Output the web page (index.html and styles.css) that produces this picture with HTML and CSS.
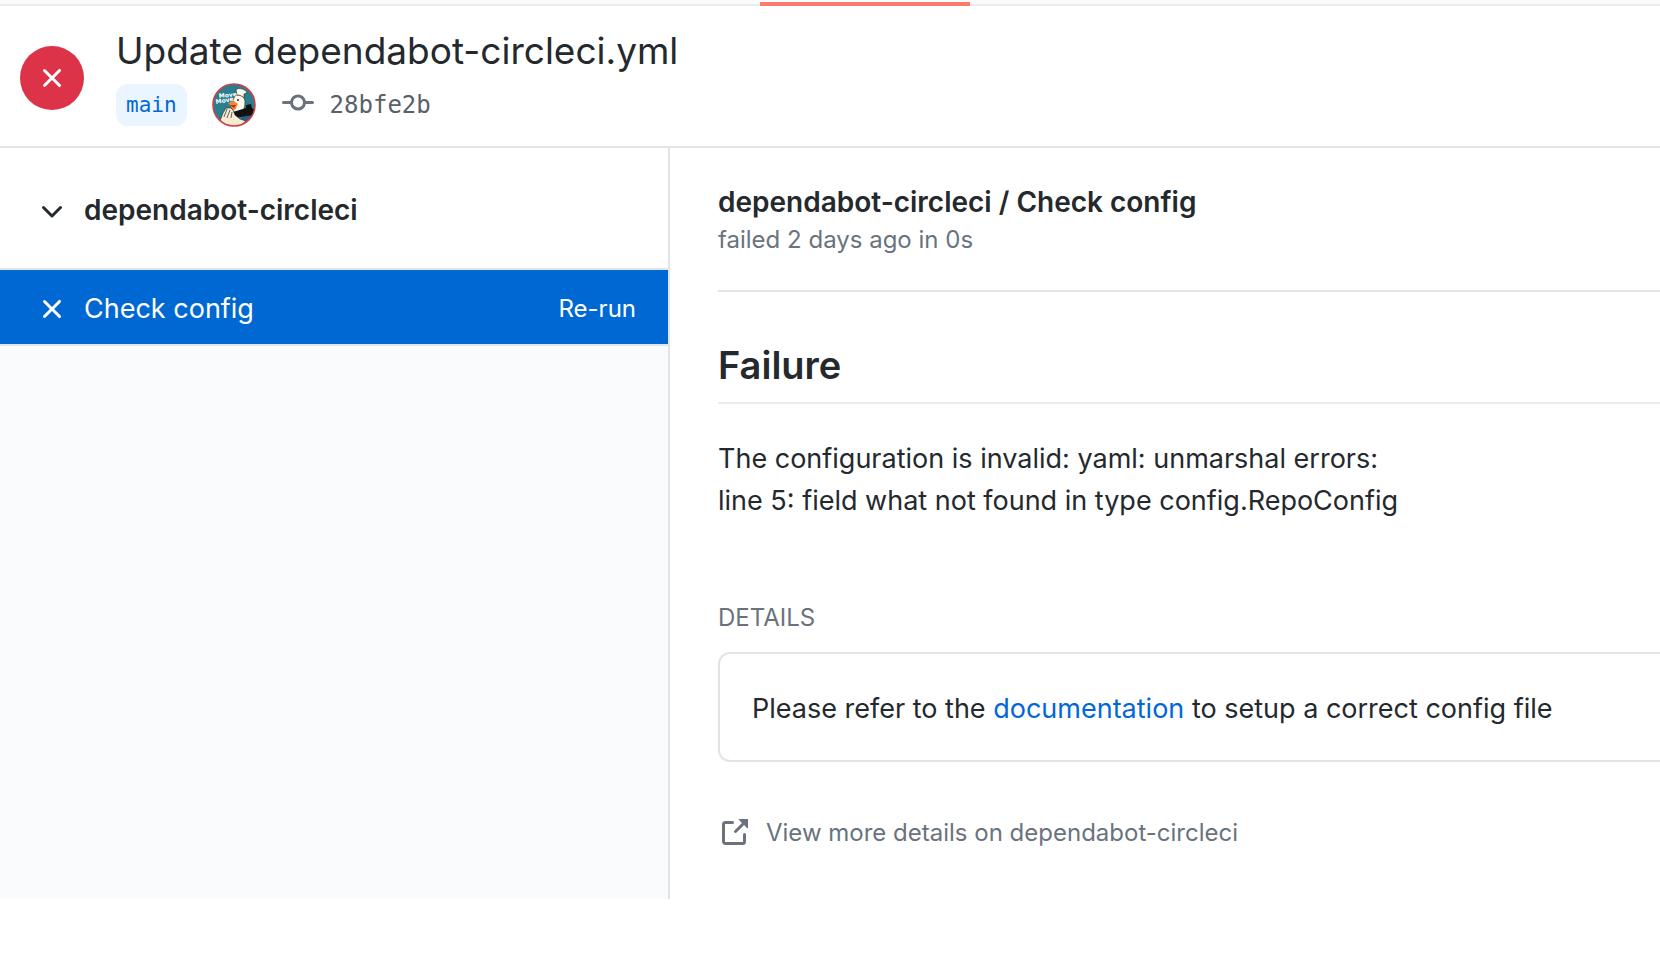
FILE: index.html
```html
<!DOCTYPE html>
<html lang="en">
<head>
    <meta charset="UTF-8">
    <meta name="viewport" content="width=device-width, initial-scale=1.0">
    <title>Update dependabot-circleci.yml - Checks</title>
    <link rel="stylesheet" href="styles.css">
</head>
<body>
    <nav class="tabs">
        <div class="tab-active"></div>
    </nav>

    <header class="commit-header">
        <div class="status-badge">
            <svg class="icon" viewBox="0 0 16 16"><path d="M3.72 3.72a.75.75 0 011.06 0L8 6.94l3.22-3.22a.75.75 0 111.06 1.06L9.06 8l3.22 3.22a.75.75 0 11-1.06 1.06L8 9.06l-3.22 3.22a.75.75 0 01-1.06-1.06L6.94 8 3.72 4.78a.75.75 0 010-1.06z"/></svg>
        </div>
        <div class="commit-info">
            <h1>Update dependabot-circleci.yml</h1>
            <div class="commit-meta">
                <a class="branch" href="#">main</a>
                <svg class="avatar" viewBox="0 0 44 44">
                    <defs>
                        <clipPath id="avatar-clip"><circle cx="22" cy="22" r="21"/></clipPath>
                    </defs>
                    <g clip-path="url(#avatar-clip)">
                        <rect width="44" height="44" fill="#2a7f8f"/>
                        <path d="M31 33l10-2 1 7-10 6-7-3z" fill="#2b5c88"/>
                        <path d="M21 20c0-5 2-8 5-8s7 2 7 7c0 5-1 8-4 10l-8 0z" fill="#fbf7ea" stroke="#222" stroke-width=".6"/>
                        <path d="M24 7c2-3 10-1 11 3l-3 1 0 4c-2-2-4-3-7-3z" fill="#fbf7ea" stroke="#222" stroke-width=".6"/>
                        <path d="M16 20l6-2 4 3-3 6-3-1-1-3z" fill="#f08a2c"/>
                        <path d="M18 22l6 0-2 3z" fill="#c3262c"/>
                        <path d="M21 29l13-4 0-3 5-1 1 4 3 2 0 5-9 1-10 2z" fill="#111"/>
                        <path d="M8 38l3-8 3-5 2 0 3 0 2 2 2 5 5 4 6 2-6 5-10 2z" fill="#f7ecd3" stroke="#222" stroke-width=".6"/>
                        <path d="M12 34l3-8M15 35l3-8M19 35l1-6" stroke="#222" stroke-width=".7"/>
                        <circle cx="26" cy="17" r=".9" fill="#111"/>
                    </g>
                    <text class="avatar-text" x="7" y="15" transform="rotate(-6 7 15)">Move</text>
                    <text class="avatar-text" x="4" y="21" transform="rotate(-10 4 21)">Move</text>
                    <circle cx="22" cy="22" r="21" fill="none" stroke="#cf3f42" stroke-width="1.6"/>
                </svg>
                <a class="sha" href="#">
                    <svg class="icon" viewBox="0 0 16 16"><path fill-rule="evenodd" d="M10.5 7.75a2.5 2.5 0 11-5 0 2.5 2.5 0 015 0zm1.43.75a4.002 4.002 0 01-7.86 0H.75a.75.75 0 110-1.5h3.32a4.001 4.001 0 017.86 0h3.32a.75.75 0 110 1.5h-3.32z"/></svg>
                    <span>28bfe2b</span>
                </a>
            </div>
        </div>
    </header>

    <div class="checks">
        <aside class="sidebar">
            <button class="suite" type="button">
                <svg class="icon" viewBox="0 0 16 16"><path d="M12.78 6.22a.75.75 0 010 1.06l-4.25 4.25a.75.75 0 01-1.06 0L3.22 7.28a.75.75 0 011.06-1.06L8 9.94l3.72-3.72a.75.75 0 011.06 0z"/></svg>
                <span>dependabot-circleci</span>
            </button>
            <div class="check-run">
                <svg class="icon" viewBox="0 0 16 16"><path d="M3.72 3.72a.75.75 0 011.06 0L8 6.94l3.22-3.22a.75.75 0 111.06 1.06L9.06 8l3.22 3.22a.75.75 0 11-1.06 1.06L8 9.06l-3.22 3.22a.75.75 0 01-1.06-1.06L6.94 8 3.72 4.78a.75.75 0 010-1.06z"/></svg>
                <a class="check-name" href="#">Check config</a>
                <button class="rerun" type="button">Re-run</button>
            </div>
        </aside>

        <main class="content">
            <div class="run-header">
                <h2>dependabot-circleci / Check config</h2>
                <p>failed 2 days ago in 0s</p>
            </div>

            <h3 class="result-title">Failure</h3>
            <p class="summary">The configuration is invalid: yaml: unmarshal errors:<br>line 5: field what not found in type config.RepoConfig</p>

            <h4 class="details-title">DETAILS</h4>
            <div class="details-box">Please refer to the <a href="#">documentation</a> to setup a correct config file</div>

            <a class="more-link" href="#">
                <svg class="icon" viewBox="0 0 16 16"><path fill-rule="evenodd" d="M10.604 1h4.146a.25.25 0 01.25.25v4.146a.25.25 0 01-.427.177L13.03 4.03 9.28 7.78a.75.75 0 01-1.06-1.06l3.75-3.75-1.543-1.543A.25.25 0 0110.604 1zM3.75 2A1.75 1.75 0 002 3.75v8.5c0 .966.784 1.75 1.75 1.75h8.5A1.75 1.75 0 0014 12.25v-3.5a.75.75 0 00-1.5 0v3.5a.25.25 0 01-.25.25h-8.5a.25.25 0 01-.25-.25v-8.5a.25.25 0 01.25-.25h3.5a.75.75 0 000-1.5h-3.5z"/></svg>
                <span>View more details on dependabot-circleci</span>
            </a>
        </main>
    </div>
</body>
</html>
```

FILE: styles.css
```css
* {
    margin: 0;
    padding: 0;
    box-sizing: border-box;
}

body {
    font-family: Inter, "Liberation Sans", sans-serif;
    font-size: 27px;
    line-height: 42px;
    color: #24292e;
    background: #fff;
}

a {
    color: #0068d6;
    text-decoration: none;
}

button {
    font: inherit;
    color: inherit;
    background: none;
    border: none;
    cursor: pointer;
}

.icon {
    width: 32px;
    height: 32px;
    flex: none;
    fill: currentColor;
}

/* Tab strip */
.tabs {
    display: flex;
    align-items: flex-end;
    height: 6px;
    padding-left: 760px;
    background: linear-gradient(#fafbfc 4px, #eaecef 4px);
}

.tab-active {
    width: 210px;
    height: 4px;
    background: #ff7b6e;
}

/* Commit header */
.commit-header {
    display: flex;
    align-items: flex-end;
    gap: 32px;
    padding: 20px;
    border-bottom: 2px solid #e1e4e8;
}

.status-badge {
    display: flex;
    align-items: center;
    justify-content: center;
    width: 64px;
    height: 64px;
    margin-bottom: 16px;
    border-radius: 50%;
    color: #fff;
    background: #dc3349;
}

.commit-info h1 {
    font-size: 37px;
    font-weight: 400;
    line-height: 50px;
}

.commit-meta {
    display: flex;
    align-items: center;
    height: 50px;
    padding-top: 8px;
    font-family: "DejaVu Sans Mono", monospace;
}

.branch {
    padding: 0 10px;
    font-size: 21px;
    border-radius: 12px;
    background: #eaf5ff;
}

.avatar {
    width: 44px;
    height: 44px;
    margin: 0 26px 0 25px;
}

.avatar-text {
    font: bold 6px "DejaVu Sans", sans-serif;
    fill: #fff;
}

.sha {
    display: flex;
    align-items: flex-start;
    gap: 16px;
    font-size: 24px;
    line-height: 36px;
    color: #586069;
}

.sha .icon {
    color: #6a737d;
}

/* Checks */
.checks {
    display: grid;
    grid-template-columns: 670px 1fr;
}

.sidebar {
    border-right: 2px solid #e1e4e8;
    background: #fafbfc;
}

.suite,
.check-run {
    display: flex;
    align-items: center;
    gap: 16px;
    width: 100%;
    padding: 4px 32px 0 36px;
    border-bottom: 2px solid #e1e4e8;
}

.suite {
    height: 122px;
    font-size: 28px;
    font-weight: 600;
    background: #fff;
}

.check-run {
    height: 76px;
    color: #fff;
    background: #0068d2;
    background-clip: padding-box;
}

.check-name {
    flex: 1;
    color: #fff;
}

.rerun {
    font-size: 24px;
}

.content {
    padding: 34px 0 38px 48px;
}

.run-header {
    padding-bottom: 32px;
    border-bottom: 2px solid #e1e4e8;
}

.run-header h2 {
    font-size: 28px;
    font-weight: 600;
    line-height: 40px;
}

.run-header p {
    font-size: 24px;
    line-height: 36px;
    color: #6a737d;
}

.result-title {
    margin: 48px 0 34px;
    padding-bottom: 12px;
    font-size: 38px;
    font-weight: 600;
    line-height: 50px;
    border-bottom: 2px solid #eaecef;
}

.details-title {
    margin: 78px 0 16px;
    font-size: 24px;
    font-weight: 400;
    line-height: 36px;
    color: #6a737d;
}

.details-box {
    padding: 34px 32px 30px;
    border: 2px solid #e1e4e8;
    border-right: none;
    border-radius: 12px 0 0 12px;
}

.more-link {
    display: inline-flex;
    align-items: center;
    gap: 16px;
    margin-top: 50px;
    font-size: 24px;
    color: #6a737d;
}
```
